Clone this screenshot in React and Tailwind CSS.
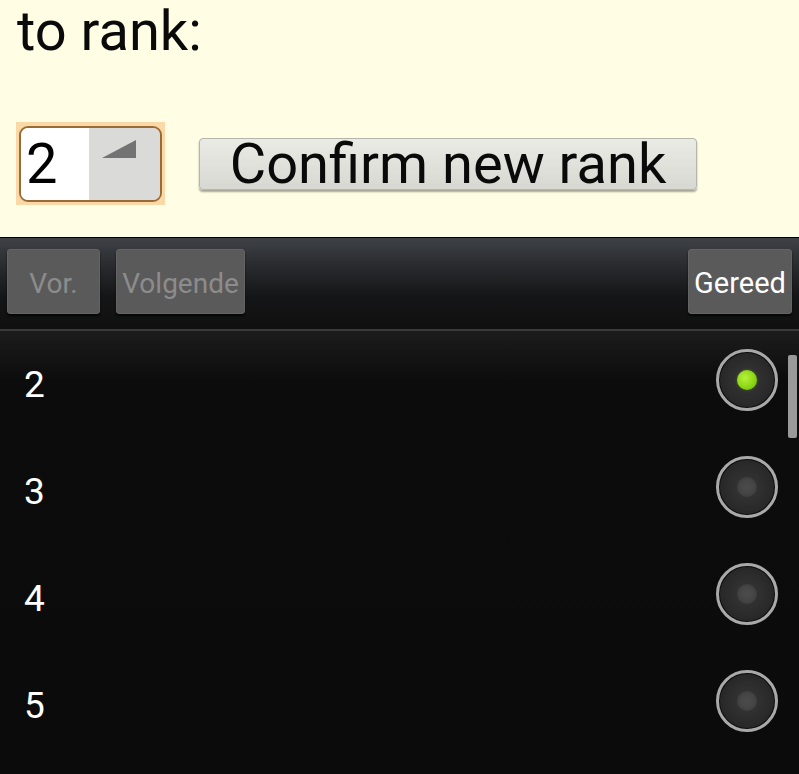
import { useState } from 'react';

const rows = [2, 3, 4, 5];

const Radio = ({ checked }) => (
    <div className="w-[62px] h-[62px] rounded-full border-[3px] border-[#a9a9a9] p-[1px] bg-[#0d0d0d] mb-[10px] shrink-0">
        <div className="w-full h-full rounded-full bg-[radial-gradient(circle,#373737_0%,#2a2a2a_60%,#202020_100%)] flex items-center justify-center">
            {checked ? (
                <div className="w-[20px] h-[20px] rounded-full bg-[radial-gradient(circle_at_40%_40%,#b6f23a_0%,#8cd615_55%,#6fb00a_100%)] shadow-[0_0_3px_#7ac21066]" />
            ) : (
                <div className="w-[20px] h-[20px] rounded-full bg-[radial-gradient(circle,#4c4c4c_0%,#454545_50%,#333333_100%)]" />
            )}
        </div>
    </div>
);

const ToolButton = ({ children, className, active }) => (
    <div
        className={`h-[65px] pt-[4px] rounded-[3px] bg-[#5a5a5a] border border-[#646464] shadow-[0_2px_2px_rgba(0,0,0,0.7)] flex items-center justify-center text-[28px] ${
            active ? 'text-white' : 'text-[#8c8c8c]'
        } ${className}`}
    >
        {children}
    </div>
);

const App = () => {
    const [rank] = useState(2);

    return (
        <div className="w-[799px] h-[774px] overflow-hidden font-['Roboto',sans-serif] relative bg-[#0b0b0b]">
            {/* page */}
            <div className="h-[238px] bg-[#fffde4] border-b border-black pt-[3px]">
                <h2 className="ml-[17px] text-[56px] leading-none text-[#0a0a0a]">
                    to rank:
                </h2>
                <div className="flex items-center mt-[63px]">
                    <div className="ml-[16px] w-[149px] h-[83px] bg-[#fbd9a7] p-[3px] flex items-center">
                        <div className="w-full h-[76px] rounded-[9px] border-2 border-[#9a6a37] overflow-hidden flex">
                            <div className="w-[68px] bg-white flex items-center pl-[5px] text-[56px] leading-none text-black">
                                {rank}
                            </div>
                            <div className="flex-1 bg-[#dadad8] relative">
                                <svg
                                    className="absolute left-[13px] top-[12px]"
                                    width="34"
                                    height="18"
                                    viewBox="0 0 34 18"
                                >
                                    <polygon points="0,18 34,0 34,18" fill="#737373" />
                                </svg>
                            </div>
                        </div>
                    </div>
                    <button className="ml-[34px] w-[498px] h-[52px] rounded-[4px] border border-[#b5b5ae] bg-[linear-gradient(#ebebe5,#d8d8d2)] shadow-[0_2px_2px_rgba(0,0,0,0.35)] flex items-center justify-center text-[56px] leading-none text-[#0a0a0a]">
                        Confirm new rank
                    </button>
                </div>
            </div>

            {/* keyboard toolbar */}
            <div className="h-[91px] bg-[linear-gradient(#3e4146_0%,#26282b_35%,#141516_65%,#101010_100%)] flex items-start pt-[11px] px-[7px]">
                <ToolButton className="w-[93px]">Vor.</ToolButton>
                <ToolButton className="w-[129px] ml-[16px]">Volgende</ToolButton>
                <ToolButton className="w-[104px] ml-auto text-[29px]" active>
                    Gereed
                </ToolButton>
            </div>
            <div className="h-[2px] bg-[#3a3a3a]" />

            {/* picker list */}
            <div className="bg-[linear-gradient(#1c1c1c_0px,#0c0c0c_50px,#0b0b0b_100%)] relative">
                {rows.map((n) => (
                    <div
                        key={n}
                        className="h-[107px] flex items-center justify-between pl-[24px] pr-[21px]"
                    >
                        <span className="text-[37px] leading-none text-white">{n}</span>
                        <Radio checked={n === rank} />
                    </div>
                ))}
                <div className="absolute right-[2px] top-[24px] w-[9px] h-[83px] rounded-[2px] bg-[#9a9a9a]" />
            </div>
        </div>
    );
};

export default App;
